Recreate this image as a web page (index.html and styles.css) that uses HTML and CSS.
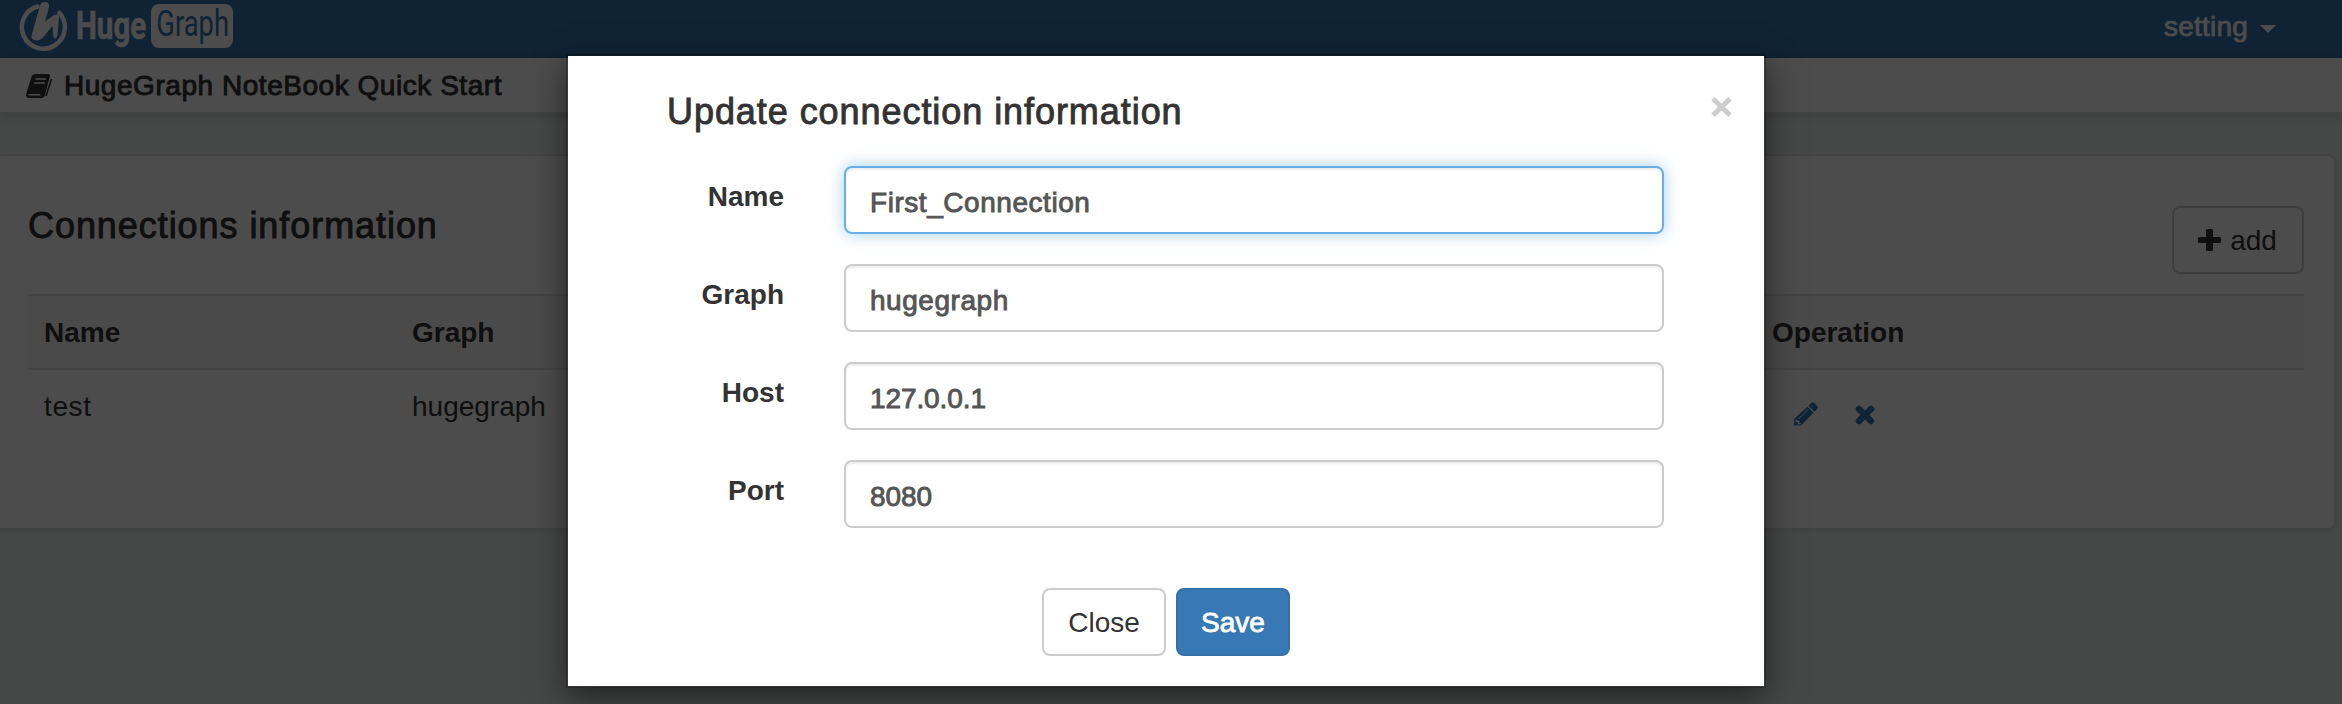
FILE: index.html
```html
<!DOCTYPE html>
<html lang="en">
<head>
<meta charset="utf-8">
<title>HugeGraph NoteBook</title>
<link rel="stylesheet" href="styles.css">
</head>
<body>
<header class="navbar">
  <div class="brand">
    <svg class="brand-mark" width="54" height="54" viewBox="0 0 54 54">
      <path d="M19.500 6.500A21.500 21.500 0 1 0 41.500 13" fill="none" stroke="#fff" stroke-width="4.500" stroke-linecap="round"/>
      <path d="M22 5.500q1.500-4 5.500-3.500t3.500 5l-4 14.500 9-6.500q5-2 5 2.500l-1.500 18q-1 4.500-4 2l-1-11.500-10.500 12.500q-4.500 3.500-9 1-2.500-1.500-1-5.500z" fill="#fff"/>
    </svg>
    <span class="brand-huge">Huge</span>
    <span class="brand-graph"><span class="brand-graph-text">Graph</span></span>
  </div>
  <div class="setting"><span>setting</span><i class="caret"></i></div>
</header>
<div class="subbar">
  <svg class="book" width="27" height="24" viewBox="0 0 27 24">
    <path d="M9 0h13.500q2 0 1.300 2.500L19 21q-.8 3-3.500 3H3.500Q0 24 0 20.500L5.500 3Q6.500 0 9 0z" fill="#333"/>
    <path d="M9.500 5h10.500M8.300 9h10.500M2.500 20.800h12" fill="none" stroke="#fff" stroke-width="1.500"/>
    <path d="M25.500 5L20 22" stroke="#333" stroke-width="1.600" fill="none"/>
  </svg>
  <span class="quick-start">HugeGraph NoteBook Quick Start</span>
</div>
<main class="panel">
  <div class="panel-head">
    <h1>Connections information</h1>
    <button class="btn btn-add">
      <svg width="23" height="22" viewBox="0 0 23 22"><path d="M9.500 0h4q1.500 0 1.500 1.500V8h6.500Q23 8 23 9.500v3q0 1.500-1.500 1.500H15v6.500q0 1.500-1.500 1.500h-4Q8 22 8 20.500V14H1.500Q0 14 0 12.500v-3Q0 8 1.500 8H8V1.500Q8 0 9.500 0z" fill="#333"/></svg>
      <span>add</span>
    </button>
  </div>
  <div class="row row-head"><b>Name</b><b>Graph</b><b>Operation</b></div>
  <div class="row row-body"><span class="cell-name">test</span><span>hugegraph</span>
    <span class="ops">
      <svg width="24" height="24" viewBox="0 0 24 24"><path d="M17 1.200q1.800-1.800 3.600 0l2.400 2.600q1.600 1.700 0 3.400l-2.500 2.500-6-6z" fill="#337ab7"/><path d="M13.500 4.700l6 6L7 23.500H0V17z" fill="#337ab7"/><path d="M14 7.500L4.500 17" stroke="#fff" stroke-width="1"/><path d="M2.200 17.500v1.800h2.400v2.400h2" stroke="#fff" stroke-width="1.600" fill="none"/></svg>
      <svg width="20" height="20" viewBox="0 0 20 20"><path d="M4 4l12 12M16 4L4 16" stroke="#337ab7" stroke-width="6.500" stroke-linecap="round"/></svg>
    </span>
  </div>
</main>
<div class="backdrop">
  <section class="modal">
    <div class="modal-head">
      <h2>Update connection information</h2>
      <svg class="dismiss" width="21" height="20" viewBox="0 0 21 20"><path d="M2 1.800l17 16.400M19 1.800L2 18.200" stroke="#ccc" stroke-width="5"/></svg>
    </div>
    <form class="form">
      <label class="label">Name</label><div class="input focus">First_Connection</div>
      <label class="label">Graph</label><div class="input">hugegraph</div>
      <label class="label">Host</label><div class="input numeric">127.0.0.1</div>
      <label class="label">Port</label><div class="input numeric">8080</div>
    </form>
    <div class="actions">
      <button class="btn btn-close" type="button"><span>Close</span></button>
      <button class="btn btn-save" type="button"><span>Save</span></button>
    </div>
  </section>
</div>
</body>
</html>
```
FILE: styles.css
```css
* { box-sizing: border-box; }
body {
  margin: 0;
  width: 2342px;
  height: 704px;
  overflow: hidden;
  background: #ebf1ee;
  font: 28px/40px "Liberation Sans", Arial, sans-serif;
  color: #333;
}
h1, h2 { margin: 0; font-size: 36px; font-weight: 400; line-height: 40px; letter-spacing: .94px; -webkit-text-stroke: .9px; white-space: nowrap; }
span, b { white-space: nowrap; }
svg { display: block; flex: none; }

.navbar { height: 58px; background: #3776ad; color: #fff; display: flex; justify-content: space-between; }
.brand { display: flex; padding-left: 18px; }
.brand-mark { margin-right: 4px; }
.brand-huge { font: 700 39px/53px Roboto, sans-serif; transform: scaleX(.757); transform-origin: 0 50%; width: 75px; -webkit-text-stroke: .6px; }
.brand-graph { width: 82px; height: 44px; margin-top: 4px; border-radius: 8px; background: #fff; color: #3776ad; overflow: hidden; }
.brand-graph-text { display: block; font: 400 36px/41px Roboto, sans-serif; transform: scaleX(.76); transform-origin: 0 50%; padding-left: 7px; }
.setting { display: flex; align-items: center; gap: 12px; padding: 0 66px 4px 0; -webkit-text-stroke: .7px; letter-spacing: .2px; }
.caret { border: 8px solid transparent; border-top-color: #fff; border-bottom: 0; margin-top: 3px; }

.subbar { position: relative; height: 56px; background: #fff; border-bottom: 2px solid #dfdfdf; box-shadow: 0 2px 10px rgba(0,0,0,.15); display: flex; align-items: flex-start; padding: 8px 0 0 26px; gap: 11px; }
.book { margin-top: 8px; }
.quick-start { -webkit-text-stroke: .9px; letter-spacing: .54px; }

.panel { width: 2342px; height: 376px; margin: 40px 0 0 -6px; padding: 50px 30px 0 32px; background: #fff; border: 2px solid #dfdfdf; border-radius: 8px; box-shadow: 0 2px 4px rgba(0,0,0,.08); }
.panel-head { display: flex; justify-content: space-between; height: 88px; }

.btn { height: 68px; border: 2px solid #ccc; border-radius: 8px; background: #fff; color: #333; font: inherit; padding: 0; display: flex; align-items: center; justify-content: center; }
.btn span { padding-top: 2px; }
.btn-add { width: 132px; gap: 9px; padding-right: 1px; }
.row { display: grid; grid-template-columns: 368px 1360px 1fr; padding-left: 16px; }
.row-head { height: 76px; padding-top: 17px; background: #f9f9f9; border-top: 2px solid #dfdfdf; border-bottom: 2px solid #dfdfdf; }
.row-body { padding-top: 17px; }
.cell-name { letter-spacing: .6px; }
.ops { display: flex; gap: 37px; padding: 15px 0 0 22px; }
.ops svg + svg { margin-top: 3px; }

.backdrop { position: absolute; inset: 0; width: 2342px; height: 704px; overflow: hidden; background: rgba(0,0,0,.7); display: flex; justify-content: center; align-items: flex-start; padding: 54px 10px 0 0; }
.modal { width: 1200px; height: 634px; background: #fff; background-clip: padding-box; border: 2px solid rgba(0,0,0,.2); box-shadow: 0 10px 30px rgba(0,0,0,.5); }
.modal-head { display: flex; justify-content: space-between; padding: 36px 32px 0 99px; height: 110px; }
.dismiss { margin-top: 5px; }
.form { display: grid; grid-template-columns: 216px 820px; column-gap: 60px; row-gap: 30px; }
.label { text-align: right; padding-top: 11px; font-weight: 700; }
.input { height: 68px; border: 2px solid #ccc; border-radius: 8px; padding: 15px 24px; color: #555; letter-spacing: .55px; -webkit-text-stroke: .9px; box-shadow: inset 0 2px 2px rgba(0,0,0,.075); }
.numeric { letter-spacing: -.1px; }
.focus { border-color: #66afe9; box-shadow: inset 0 2px 2px rgba(0,0,0,.075), 0 0 16px rgba(102,175,233,.6); }
.actions { display: flex; justify-content: center; gap: 10px; padding: 60px 0 0; }
.btn-close { width: 124px; }
.btn-save { width: 114px; background: #3879b5; border-color: #3370aa; color: #fff; -webkit-text-stroke: .8px; }
```
